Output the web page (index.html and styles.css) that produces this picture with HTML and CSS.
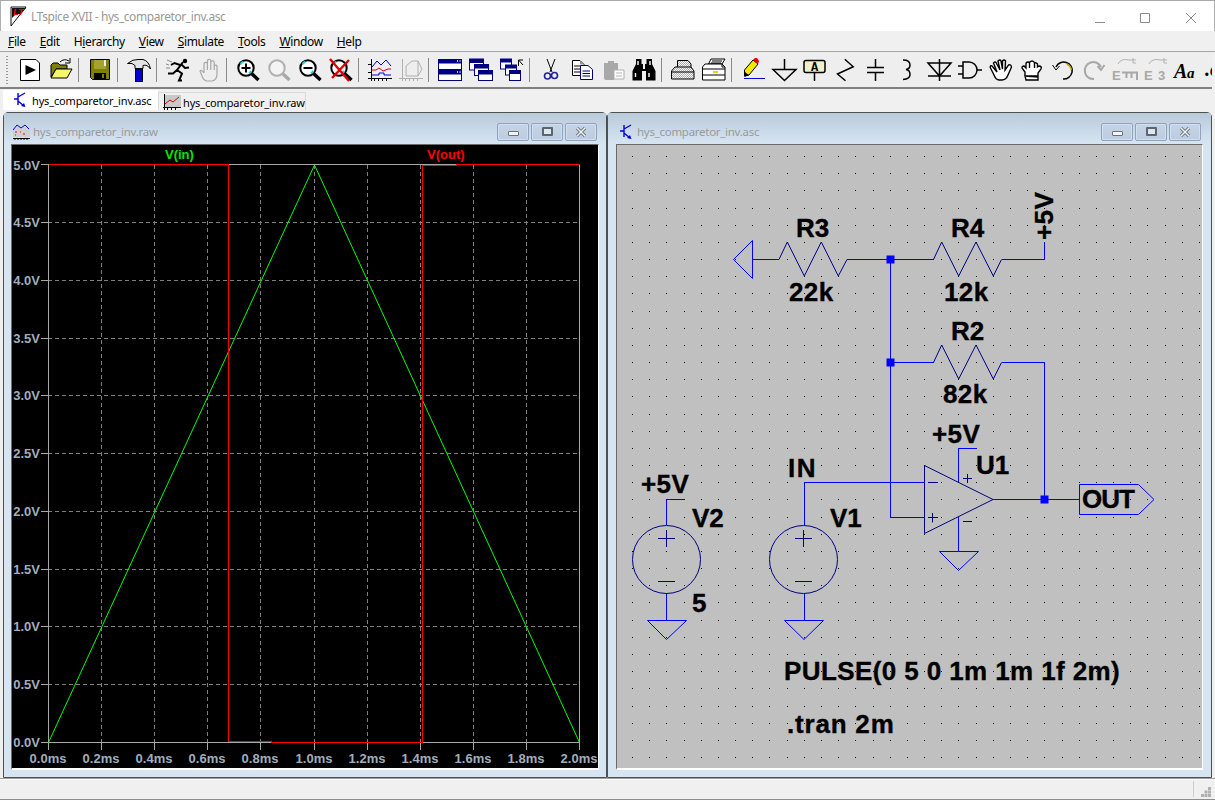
FILE: index.html
```html
<!DOCTYPE html>
<html lang="en">
<head>
<meta charset="utf-8">
<title>LTspice XVII - hys_comparetor_inv.asc</title>
<link rel="stylesheet" href="styles.css">
</head>
<body>
<div class="app">
  <header class="titlebar">
    <svg class="logo" viewBox="0 0 18 24"><path class="logo-tri" d="M1 2V21L16 2Z"/><path class="logo-flag" d="M2 3H16L11 9H6L2 13Z"/><text class="logo-text" x="3" y="10">LT</text></svg>
    <span class="apptitle">LTspice XVII - hys_comparetor_inv.asc</span>
    <div class="capbtns">
      <svg class="capsvg" viewBox="0 0 120 20"><path d="M3 15.5H13M48.5 6.5H57.5V15.5H48.5ZM94 6L104 16M104 6L94 16"/></svg>
    </div>
  </header>
  <nav class="menubar">
    <span><u>F</u>ile</span><span><u>E</u>dit</span><span>H<u>i</u>erarchy</span><span><u>V</u>iew</span><span><u>S</u>imulate</span><span><u>T</u>ools</span><span><u>W</u>indow</span><span><u>H</u>elp</span>
  </nav>
  <div class="toolbar">
    <i class="grip"></i>
    <span class="tb"><svg class="ico" viewBox="0 0 24 24"><path class="k w" d="M2.5 1.5H18L21.5 5V22.5H2.5Z"/><path d="M7.5 7L18 12L7.5 17Z"/></svg></span>
    <span class="tb"><svg class="ico" viewBox="0 0 24 24"><path class="k" fill="#808000" d="M2 19V7L4 5H9L11 7H18V11H7L2 19Z"/><path class="k" fill="#f5f56a" d="M2 20L7 11H23L18 20Z"/><path class="k n" d="M11 4Q15 0 20 3M21 0V5H16"/></svg></span>
    <i class="sep"></i>
    <span class="tb"><svg class="ico" viewBox="0 0 24 24"><path class="k" fill="#808000" d="M2.5 1.5H21.5V21.5H4.5L2.5 19.5Z"/><rect x="6" y="2" width="12" height="9" fill="#a3a32e"/><rect x="16" y="2" width="2" height="6" fill="#eee"/><rect x="6" y="15" width="12" height="6" fill="#000"/><rect x="14" y="16" width="2" height="4" fill="#808000"/></svg></span>
    <i class="sep"></i>
    <span class="tb"><svg class="ico" viewBox="0 0 24 24"><rect class="k" x="8.500" y="11" width="7" height="12.500" fill="#0000d0"/><path class="k" fill="#e4e4e4" d="M.5 5.500Q6 1 11 1.500H16Q22 3 23.500 11Q20 6 16 7.500V10.500H8V7.500L5 5.500Z"/></svg></span>
    <i class="sep"></i>
    <span class="tb"><svg class="ico" viewBox="0 0 24 24"><circle cx="19" cy="3" r="2.2"/><path class="run" d="M17 4L11 12L7 15.5H2M14 7L8.5 5L5 7M15 6L19 10L23 9.5M11 12L16 15.5L13 22.5H16"/><path class="runs" d="M1 2L6 4M0 6L3 7M0 10H4"/></svg></span>
    <span class="tb"><svg class="ico" viewBox="0 0 24 24"><path class="hg" d="M7 15V6A1.7 1.7 0 0 1 10.4 6V3A1.7 1.7 0 0 1 13.8 3V4.500A1.700 1.700 0 0 1 17.200 4.500V8A1.500 1.500 0 0 1 20 8V16Q20 22 15 23H10Q7 23 5 18L3 13Q4 11 7 15M10.400 6V12M13.800 3V12M17.200 5V12"/></svg></span>
    <i class="sep"></i>
    <span class="tb"><svg class="ico" viewBox="0 0 24 24"><path class="hd" d="M15.500 15.500L22.500 22"/><circle class="gl" cx="10" cy="10" r="7.700"/><path class="cy" d="M4.500 6L7 3.500M13 15.500L15.500 13"/><path class="pm" d="M5.500 10H14.500M10 5.500V14.500"/></svg></span>
    <span class="tb"><svg class="ico" viewBox="0 0 24 24"><path class="hd dim" d="M15.500 15.500L22.500 22"/><circle class="gl dim" cx="10" cy="10" r="7.700"/></svg></span>
    <span class="tb"><svg class="ico" viewBox="0 0 24 24"><path class="hd" d="M15.500 15.500L22.500 22"/><circle class="gl" cx="10" cy="10" r="7.700"/><path class="cy" d="M4.500 6L7 3.500M13 15.500L15.500 13"/><path class="pm" d="M5.500 10H14.500"/></svg></span>
    <span class="tb"><svg class="ico" viewBox="0 0 24 24"><path class="hd" d="M15.500 15.500L22.500 22"/><circle class="gl" cx="10" cy="10" r="7.700"/><path class="cy" d="M4.500 6L7 3.500M13 15.500L15.500 13"/><path class="xr" d="M1 1L20 23M20 2L3 20"/></svg></span>
    <i class="sep"></i>
    <span class="tb"><svg class="ico" viewBox="0 0 24 24"><path class="ax" d="M3.500 1V23M0 20.500H24M6.500 20.500V23M10.500 20.500V23M14.500 20.500V23M18.500 20.500V23M0 6.500H3M0 14.500H3"/><path class="bl" d="M4 9L9 3L13 7L18 2L23 8"/><path class="re" d="M4 12H8L11 10L15 13L20 11H23"/><path class="bl" d="M4 17H11V15H16V17H23"/></svg></span>
    <span class="tb"><svg class="ico" viewBox="0 0 24 24"><path class="g1" d="M3.500 1V23M0 20.500H24M6.500 20.500V23M10.500 20.500V23M14.500 20.500V23M18.500 20.500V23M7 8L13 3H19L23 11L19 18H7ZM19 3V18"/></svg></span>
    <i class="sep"></i>
    <span class="tb"><svg class="ico" viewBox="0 0 24 24"><rect class="nv" x=".5" y="1.500" width="23" height="10"/><rect x=".5" y="1.500" width="23" height="4" fill="#000080"/><rect class="nv" x=".5" y="12.500" width="23" height="10"/><rect x=".5" y="12.500" width="23" height="4" fill="#000080"/><path class="wd" d="M19 3H20M21.500 3H22.500M19 14H20M21.500 14H22.500"/></svg></span>
    <span class="tb"><svg class="ico" viewBox="0 0 24 24"><rect class="nv" x=".5" y="1" width="14" height="11"/><rect x=".5" y="1" width="14" height="4" fill="#000080"/><rect class="nv" x="5.500" y="6.500" width="14" height="11"/><rect x="5.500" y="6.500" width="14" height="4" fill="#000080"/><rect class="nv" x="9.500" y="12.500" width="14" height="10"/><rect x="9.500" y="12.500" width="14" height="4" fill="#000080"/></svg></span>
    <span class="tb"><svg class="ico" viewBox="0 0 24 24"><rect class="nv" x=".5" y="1" width="11" height="10"/><rect x=".5" y="1" width="11" height="3.500" fill="#000080"/><rect class="nv" x="5.500" y="7" width="11" height="10"/><rect x="5.500" y="7" width="11" height="3.500" fill="#000080"/><rect class="nv" x="9.500" y="12.500" width="11" height="10"/><rect x="9.500" y="12.500" width="11" height="3.500" fill="#000080"/><path class="k n" d="M18.500 8V2H23M18.500 2L23 7"/></svg></span>
    <i class="sep"></i>
    <span class="tb"><svg class="ico" viewBox="0 0 24 24"><path class="k n" d="M8 1L13 14M16 1L11 14"/><circle class="sc" cx="8.500" cy="18" r="3"/><circle class="sc" cx="15.500" cy="17.500" r="3"/></svg></span>
    <span class="tb"><svg class="ico" viewBox="0 0 24 24"><path class="k w" d="M2.500 2.500H10L14 6.500V17.500H2.500Z"/><path d="M10 2.500L14 6.500H10Z" fill="#999"/><path class="k n" d="M4 8H11M4 11H10M4 14H10"/><path class="nv" d="M10.500 7.500H18L22.500 11.500V21.500H10.500Z"/><path class="nv n" d="M12.500 13H20M12.500 15.500H20M12.500 18H20"/></svg></span>
    <span class="tb"><svg class="ico" viewBox="0 0 24 24"><path fill="#a8a8a8" d="M3 5H7V3H13V5H17V12H13V22H5Q3 22 3 20Z"/><path class="g1 w" d="M13 12H23V21H13Z"/><path class="g1" d="M15 15H21M15 18H21"/></svg></span>
    <span class="tb"><svg class="ico" viewBox="0 0 24 24"><path d="M4 1H9.500V6H11V11H13V6H14.500V1H20V6L23.500 13V22.500H14V13H10V22.500H.5V13L4 6Z"/><path class="wd" d="M3.500 15V19M17 15V19M6 3V7M18 3V7"/></svg></span>
    <i class="sep"></i>
    <span class="tb"><svg class="ico" viewBox="0 0 24 24"><path class="k" fill="url(#dith)" d="M6.500 2.500H17L20 6V13H6.500Z"/><path class="k" fill="url(#dith)" d="M.5 13L4 9H20L23 13V21H.5Z"/><path class="k n" d="M.5 14H23"/></svg></span>
    <span class="tb"><svg class="ico" viewBox="0 0 24 24"><path class="k w" d="M6.500 6L9 1H23L20 6Z"/><path class="k n" d="M10 3H20M9 5H19"/><path class="k w" d="M3 6H20L23 9V22H.5V9Z"/><path class="k n" d="M.5 11H23M.5 17H23M20 6V9H23"/><path d="M11 13H16V15H11Z" fill="#e8d800"/></svg></span>
    <i class="sep"></i>
    <span class="tb"><svg class="ico" viewBox="0 0 24 24"><path class="k" fill="#f2e800" d="M3.500 18V12L12 2L17 6L8 17Z"/><path fill="#e80000" d="M12 2L14 0H16L18 3L17 6Z"/><path d="M3.500 19L3.500 13L5 15L8 17Z"/><path class="bl" d="M3 20.500H24"/></svg></span>
    <span class="tb"><svg class="ico" viewBox="0 0 24 24"><path class="gnd" d="M12.500 1V11.500M1 11.500H24L12.500 22.500Z"/></svg></span>
    <span class="tb"><svg class="ico" viewBox="0 0 24 24"><rect x="1" y="2.500" width="21" height="12" rx="2" fill="#f2efc9"/><rect x="1" y="2.500" width="21" height="12" rx="2" class="gnd"/><text class="icotxt" x="8" y="13">A</text><path class="gnd" d="M11.500 15V23"/></svg></span>
    <span class="tb"><svg class="ico" viewBox="0 0 24 24"><path class="gnd" d="M10.800 1.300L19.200 8.700L3.500 16L11.500 22.700"/></svg></span>
    <span class="tb"><svg class="ico" viewBox="0 0 24 24"><path class="gnd" d="M10.500 1V9.500M2 9.500H19M2 14.500H19M10.500 14.500V23"/></svg></span>
    <span class="tb"><svg class="ico" viewBox="0 0 24 24"><path class="gnd" d="M7 2Q14 2 14 7Q14 11 10 11.500Q14 12 14 16.500Q14 21 7 21.500"/></svg></span>
    <span class="tb"><svg class="ico" viewBox="0 0 24 24"><path class="gnd" d="M1 5H24L12.500 18ZM1 18H24M12.500 1V23"/></svg></span>
    <span class="tb"><svg class="ico" viewBox="0 0 24 24"><path class="gnd" d="M0 8H5M0 16H5M5 4H11A8 8 0 0 1 11 20H5ZM19 12H24"/></svg></span>
    <span class="tb"><svg class="ico" viewBox="0 0 24 24"><path class="hb" d="M1 9Q2 7 3 8L8 14L4.500 5Q6 3 7 4.500L11 12L9 3Q11 1 12 3L13.500 11L13.500 3Q15 1 16.500 3L16 12L19.500 7Q22 6 22.500 9L19 17Q17 22 13 22H10Q7 22 5 17L1 9"/></svg></span>
    <span class="tb"><svg class="ico" viewBox="0 0 24 24"><path class="hb" d="M5 18V14L2 10Q2 8 4 8L6 10V6Q6 4 8 4Q9 4 9.500 5Q10 3 12 3Q14 3 14.500 5Q16 4 17.500 6V9L19 8Q22 8 21 11L18 15V19ZM5 18H18V22H6ZM9.500 5V10M14.500 5V10"/></svg></span>
    <span class="tb"><svg class="ico" viewBox="0 0 24 24"><path class="gnd" d="M5 9A8.500 8.500 0 1 1 12 21"/><path class="k n" d="M1.500 7L5 12L8.500 8"/><path class="ye" d="M16 6A8.500 8.500 0 0 1 20.500 12"/></svg></span>
    <span class="tb"><svg class="ico" viewBox="0 0 24 24"><path class="g2" d="M19 9A8.500 8.500 0 1 0 12 21M22.500 7L19 12L15.500 8"/></svg></span>
    <span class="tb"><svg class="ico" viewBox="0 0 24 24"><text class="emt" x="-1" y="22">E</text><path class="g2" d="M9 14.500H24V22M13.500 15V20M18.500 15V20"/><path class="g1" d="M5 6Q8 0 16 2H23M20 0V5H23"/></svg></span>
    <span class="tb"><svg class="ico" viewBox="0 0 24 24"><text class="emt" x="0" y="22">E</text><text class="emt" x="14" y="22">3</text><path class="g1" d="M5 6Q8 0 16 2H23M20 0V5H23"/></svg></span>
    <span class="tb"><svg class="ico" viewBox="0 0 24 24"><text class="aa" x="-1" y="20">A</text><text class="ab" x="12" y="20">a</text></svg></span>
    <span class="tb"><svg class="ico ovf" viewBox="0 0 24 24"><text class="aa" x="-1" y="18">.o</text></svg></span>
  </div>
  <div class="tabs">
    <div class="tab active">
      <svg class="tabico" viewBox="0 0 14 16"><path class="tr" d="M5 1V13M1 7H5M5 5L12 1M5 9L11 14"/><path class="tra" d="M12.500 15L8 14L11 11Z"/></svg>
      <span>hys_comparetor_inv.asc</span>
    </div>
    <div class="tab">
      <svg class="tabico wide" viewBox="0 0 18 16"><rect x="2" y="1" width="16" height="13" fill="#c8c8c8"/><path class="ax" d="M1.500 0V16M0 13.500H18M4.500 13.500V16M8.500 13.500V16M12.500 13.500V16"/><path class="re" d="M2 10L7 6L10 8L16 3"/></svg>
      <span>hys_comparetor_inv.raw</span>
    </div>
  </div>
  <main class="desk">
    <section class="win win-left">
      <div class="wintitle">
        <svg class="winico" viewBox="0 0 17 16"><rect y="4" width="17" height="9" fill="#cfcfcf"/><path class="bl" d="M0 6L4 1L8 4L12 1L16 5"/><path class="dots" d="M2 8H4M7 8H8M10 10H12M2 11H3"/><path class="ax" d="M0 14.500H17M2 14.500V16M5 14.500V16M8 14.500V16M11 14.500V16M14 14.500V16"/></svg>
        <span class="wintext">hys_comparetor_inv.raw</span>
        <span class="wbtn"><i class="g-min"></i></span><span class="wbtn"><i class="g-res"></i></span><span class="wbtn"><svg class="g-x" viewBox="0 0 12 10"><path d="M2 1L10 9M10 1L2 9"/><path class="in" d="M2 1L10 9M10 1L2 9"/></svg></span>
      </div>
      <div class="client client-plot">
        <svg class="canvas" viewBox="12 145 586 623">
          <path class="grid" d="M48 222.500H579M48 280.500H579M48 338.500H579M48 395.500H579M48 453.500H579M48 511.500H579M48 569.500H579M48 626.500H579M48 684.500H579M101.500 165V742M154.500 165V742M207.500 165V742M260.500 165V742M314.500 165V742M367.500 165V742M420.500 165V742M473.500 165V742M526.500 165V742"/>
          <path class="frame" d="M48.500 164.500H579.500V742.500H48.500ZM41 164.500H48M41 222.500H48M41 280.500H48M41 338.500H48M41 395.500H48M41 453.500H48M41 511.500H48M41 569.500H48M41 626.500H48M41 684.500H48M41 742.500H48M48.500 743V750M101.500 743V750M154.500 743V750M207.500 743V750M260.500 743V750M314.500 743V750M367.500 743V750M420.500 743V750M473.500 743V750M526.500 743V750M579.500 743V750"/>
          <path class="trace-g" d="M48.500 742.500L314.500 165L579.500 742.500"/>
          <path class="trace-r" d="M48.500 164.500H228.500V741.500H271V742.500H422.500V165.500H456V164.500H579.500"/>
          <text class="probe pg" x="165" y="159">V(in)</text>
          <text class="probe pr" x="427" y="159">V(out)</text>
          <g class="yl">
            <text x="40" y="170">5.0V</text><text x="40" y="227">4.5V</text><text x="40" y="285">4.0V</text><text x="40" y="343">3.5V</text><text x="40" y="400">3.0V</text><text x="40" y="458">2.5V</text><text x="40" y="516">2.0V</text><text x="40" y="574">1.5V</text><text x="40" y="631">1.0V</text><text x="40" y="689">0.5V</text><text x="40" y="747">0.0V</text>
          </g>
          <g class="xl">
            <text x="48" y="763">0.0ms</text><text x="101" y="763">0.2ms</text><text x="154" y="763">0.4ms</text><text x="207" y="763">0.6ms</text><text x="260" y="763">0.8ms</text><text x="314" y="763">1.0ms</text><text x="367" y="763">1.2ms</text><text x="420" y="763">1.4ms</text><text x="473" y="763">1.6ms</text><text x="526" y="763">1.8ms</text><text x="579" y="763">2.0ms</text>
          </g>
        </svg>
      </div>
    </section>
    <section class="win win-right">
      <div class="wintitle">
        <svg class="winico small" viewBox="0 0 14 16"><path class="tr" d="M5 1V13M1 7H5M5 5L12 1M5 9L11 14"/><path class="tra" d="M12.500 15L8 14L11 11Z"/></svg>
        <span class="wintext">hys_comparetor_inv.asc</span>
        <span class="wbtn"><i class="g-min"></i></span><span class="wbtn"><i class="g-res"></i></span><span class="wbtn"><svg class="g-x" viewBox="0 0 12 10"><path d="M2 1L10 9M10 1L2 9"/><path class="in" d="M2 1L10 9M10 1L2 9"/></svg></span>
      </div>
      <div class="client client-sch">
        <svg class="canvas" viewBox="617 145 585 623">
          <path class="griddots" d="M632 156.500H1201M632 173.700H1201M632 190.800H1201M632 208H1201M632 225.200H1201M632 242.400H1201M632 259.500H1201M632 276.700H1201M632 293.900H1201M632 311H1201M632 328.200H1201M632 345.400H1201M632 362.600H1201M632 379.700H1201M632 396.900H1201M632 414.100H1201M632 431.200H1201M632 448.400H1201M632 465.600H1201M632 482.700H1201M632 499.900H1201M632 517.100H1201M632 534.300H1201M632 551.400H1201M632 568.600H1201M632 585.800H1201M632 602.900H1201M632 620.100H1201M632 637.300H1201M632 654.500H1201M632 671.600H1201M632 688.800H1201M632 706H1201M632 723.100H1201M632 740.300H1201M632 757.500H1201"/>
          <path class="wire" d="M752.500 259.500H779M847 259.500H933.500M1001.500 259.500H1044.500V241.500M890.500 259.500V517.500H924.500M890.500 362.500H933.500M1001.500 362.500H1044.500V499.500M804 482.500H924.500M804 482.500V525M804 593V620.500M666.500 499.500H685M666.500 499.500V525M666.500 593V620.500M958.500 481.500V448.500H977M958.500 517V551.500M993 499.500H1079.500"/>
          <path class="gndw" d="M647.500 620.500H686.500L666.500 639.500ZM784.500 620.500H823.500L804 639.500ZM939.500 551.500H978.500L958.500 570.500ZM752.500 240.500V278.500L733.500 259.500ZM1079.500 484.500H1138.500L1154 499.500L1138.500 514.500H1079.500Z"/>
          <path class="sym" d="M779 259.500L787.300 242L804.300 276L821.300 242L838.300 276L847 259.500M933.500 259.500L941.700 242L958.700 276L976 242L993.300 276L1001.500 259.500M933.500 362.500L941.700 345L958.700 379L976 345L993.300 379L1001.500 362.500"/>
          <circle class="sym" cx="666.500" cy="559.500" r="34"/>
          <circle class="sym" cx="803.500" cy="559.500" r="34"/>
          <path class="sym" d="M658 538.500H675M666.500 530V547M658 581.500H675M795 538.500H812M803.500 530V547M795 581.500H812M924.500 465.500V533.500L993 499.500ZM928 482.500H938M928 517.500H938M932.500 513V522.500M963 478.500H972M967.500 474V483M963 521.500H972"/>
          <rect class="jn" x="886.500" y="255.500" width="8" height="8"/>
          <rect class="jn" x="886.500" y="358.500" width="8" height="8"/>
          <rect class="jn" x="1040.500" y="495.500" width="8" height="8"/>
          <g class="lbl">
            <text class="tight" x="796" y="237">R3</text><text x="789" y="301">22k</text>
            <text class="tight" x="951" y="237">R4</text><text x="944" y="301">12k</text>
            <text class="tight" x="951" y="340">R2</text><text x="943" y="403">82k</text>
            <text transform="translate(1053 240) rotate(-90)">+5V</text>
            <text x="641" y="493">+5V</text><text class="tight" x="692" y="527">V2</text><text x="692" y="612">5</text>
            <text class="wide" x="788" y="477">IN</text><text class="tight" x="830" y="527">V1</text>
            <text x="932" y="443">+5V</text><text class="tight" x="976" y="474">U1</text>
            <text class="out" x="1082" y="508">OUT</text>
            <text x="784" y="680">PULSE(0 5 0 1m 1m 1f 2m)</text>
            <text class="dot" x="787" y="733">.tran 2m</text>
          </g>
        </svg>
      </div>
    </section>
  </main>
  <footer class="status"><i class="statsep"></i><svg class="resize" viewBox="0 0 10 10"><path d="M7 0h3v3H7zM3.500 3.500h3v3h-3zM7 3.500h3v3H7zM0 7h3v3H0zM3.500 7h3v3h-3zM7 7h3v3H7z"/></svg></footer>
  <svg class="defs" width="0" height="0"><defs><pattern id="dith" width="2" height="2" patternUnits="userSpaceOnUse"><rect width="2" height="2" fill="#fff"/><rect width="1" height="1" fill="#aaa"/><rect x="1" y="1" width="1" height="1" fill="#aaa"/></pattern></defs></svg>
</div>
</body>
</html>
```
FILE: styles.css
```css
* { box-sizing: border-box; }
html, body { margin: 0; padding: 0; height: 100%; overflow: hidden; }
body { background: #f0f0f0; font-family: "Noto Sans", "Open Sans", sans-serif; color: #000; }
.app { width: 1215px; height: 800px; display: flex; flex-direction: column; border-top: 1px solid #a8a8a8; border-bottom: 1px solid #8e8e8e; overflow: hidden; }

.titlebar { height: 30px; background: #fff; display: flex; align-items: center; padding-left: 9px; flex: none; border-left: 1px solid #b0b0b0; border-right: 1px solid #b0b0b0; }
.logo { width: 18px; height: 24px; margin-top: 1px; }
.logo-tri { fill: #fff; stroke: #111; stroke-width: 1; }
.logo-flag { fill: #111; }
.logo-text { font: italic bold 9.5px "Liberation Sans", sans-serif; fill: #f00; }
.apptitle { margin-left: 3px; font-size: 12px; color: #999; letter-spacing: -.43px; }
.capbtns { margin-left: auto; margin-right: 2px; display: flex; }
.capsvg { width: 120px; height: 20px; margin-top: 2px; }
.capsvg path { stroke: #8a8a8a; fill: none; stroke-width: 1; }

.menubar { height: 21px; background: #f0f0f0; display: flex; gap: 14px; padding-left: 8px; align-items: center; font-size: 12px; letter-spacing: -.36px; flex: none; border-bottom: 1px solid #a5a5a5; }
.menubar u { text-decoration: underline; }

.toolbar { height: 37px; background: #eeeeee; display: flex; align-items: center; padding-left: 6px; border-bottom: 2px solid #808080; flex: none; width: 1212px; overflow: hidden; }
.grip { width: 2px; height: 28px; margin-right: 6px; background: repeating-linear-gradient(#9a9a9a 0 1px, transparent 1px 3px); flex: none; }
.tb { width: 31px; height: 24px; display: flex; justify-content: center; flex: none; }
.ico { width: 24px; height: 24px; overflow: visible; }
.sep { width: 1px; height: 24px; background: #8a8a8a; margin: 0 5px 0 2px; flex: none; }
.k { stroke: #000; stroke-width: 1; }
.w { fill: #fff; }
.n { fill: none; }
.run { stroke: #000; stroke-width: 2; fill: none; }
.runs { stroke: #8a8a8a; stroke-width: 1; fill: none; }
.hg { stroke: #a8a8a8; stroke-width: 1.2; fill: none; }
.hb { stroke: #000; stroke-width: 1.4; fill: #fff; }
.hd { stroke: #000; stroke-width: 3.4; fill: none; }
.hd.dim { stroke: #a8a8a8; }
.gl { stroke: #000; stroke-width: 2; fill: #fff; }
.gl.dim { stroke: #b0b0b0; fill: #f4f4f4; }
.cy { stroke: #20d0e0; stroke-width: 2; fill: none; }
.pm { stroke: #000; stroke-width: 2; fill: none; }
.xr { stroke: #e00000; stroke-width: 2.4; fill: none; }
.ax { stroke: #000; stroke-width: 1; fill: none; }
.bl { stroke: #0000e0; stroke-width: 1; fill: none; }
.re { stroke: #e00000; stroke-width: 1; fill: none; }
.g1 { stroke: #b0b0b0; stroke-width: 1; fill: none; }
.g1.w { fill: #fff; }
.g2 { stroke: #a8a8a8; stroke-width: 2; fill: none; }
.nv { stroke: #000080; stroke-width: 1; fill: #fff; }
.nv.n { fill: none; }
.wd { stroke: #fff; stroke-width: 1.4; fill: none; }
.sc { stroke: #20209a; stroke-width: 1.6; fill: none; }
.gnd { stroke: #000; stroke-width: 1.5; fill: none; }
.ye { stroke: #b8a800; stroke-width: 1.5; fill: none; }
.icotxt { font: bold 12px "Liberation Mono", monospace; fill: #000; }
.emt { font: bold 13px "Liberation Sans", sans-serif; fill: #a8a8a8; }
.aa { font: italic bold 20px "Liberation Serif", serif; fill: #000; }
.ab { font: italic bold 15px "Liberation Serif", serif; fill: #000; }
.ovf { overflow: visible; }

.tabs { height: 23px; display: flex; align-items: flex-end; padding-left: 3px; background: #f0f0f0; flex: none; padding-bottom: 2px; }
.tab { height: 18px; width: 148px; display: flex; align-items: center; gap: 2px; padding-left: 4px; font-size: 11px; background: #f0f0f0; border: 1px solid #d9d9d9; border-bottom: 0; letter-spacing: -.15px; }
.tab span { margin-top: 2px; }
.tab.active { height: 20px; width: 155px; background: #fff; border: 0; padding-left: 10px; gap: 5px; }
.tab.active span { margin-top: 0; }
.tabico { width: 14px; height: 16px; flex: none; }
.tabico.wide { width: 18px; }
.tr { stroke: #0000e8; stroke-width: 1.4; fill: none; }
.tra { fill: #0000e8; }

.desk { height: 666px; display: flex; padding-left: 3px; flex: none; }
.win { display: flex; flex-direction: column; height: 666px; border: 1px solid #505050; border-radius: 5px 5px 0 0; background: #d7e5f3; padding: 0 7px 7px; }
.win-left { width: 604px; }
.win-right { width: 605px; padding: 0 8px 7px; }
.wintitle { height: 31px; margin: 0 -7px; padding: 6px 9px 0 8px; flex: none; display: flex; align-items: center; background: linear-gradient(#b9cad9, #d7e5f3); }
.win-right .wintitle { margin: 0 -8px; padding-right: 10px; }
.winico { width: 17px; height: 16px; margin: 0 3px 0 1px; flex: none; }
.winico.small { width: 14px; height: 16px; margin-left: 3px; margin-right: 4px; }
.wintext { font-size: 11.5px; color: #9a9a9a; letter-spacing: -.28px; flex: 1; }
.dots { stroke: #d01010; stroke-width: 1; fill: none; }
.wbtn { width: 32px; height: 18px; margin-left: 2px; border: 1px solid #8ea3bd; border-radius: 2px; background: linear-gradient(#c6d4e4, #bccce0); box-shadow: inset 0 0 0 1px #d3dfec; display: flex; align-items: center; justify-content: center; flex: none; }
.g-min { width: 11px; height: 5px; background: #f4f4f4; border: 1px solid #66727e; border-radius: 1px; margin-top: 4px; }
.g-res { width: 11px; height: 9px; background: #dfe6ee; border: 2px solid #5a6570; border-radius: 1px; }
.g-x { width: 12px; height: 10px; }
.g-x path { stroke: #66727e; stroke-width: 3.2; fill: none; }
.g-x path.in { stroke: #f4f6f8; stroke-width: 1.4; }
.client { height: 626px; border-top: 1px solid #6a6a6a; border-left: 1px solid #6a6a6a; border-right: 1px solid #fff; border-bottom: 2px solid #fff; flex: none; }
.client-plot { background: #000; }
.client-sch { background: #c0c0c0; }
.canvas { display: block; width: 100%; height: 100%; }

.grid { stroke: #808080; stroke-width: 1; stroke-dasharray: 4 3; fill: none; shape-rendering: crispEdges; }
.frame { stroke: #a8a8a8; stroke-width: 1; fill: none; shape-rendering: crispEdges; }
.trace-g { stroke: #00ff00; stroke-width: 1; fill: none; }
.trace-r { stroke: #ff0000; stroke-width: 1; fill: none; shape-rendering: crispEdges; }
.probe { font: bold 13px "Liberation Sans", sans-serif; }
.pg { fill: #00e800; }
.pr { fill: #f00; }
.yl text { font: bold 13px "Liberation Sans", sans-serif; fill: #a0aebc; text-anchor: end; }
.xl text { font: bold 13px "Liberation Sans", sans-serif; fill: #a0aebc; text-anchor: middle; }

.griddots { stroke: #000; stroke-width: 1; stroke-dasharray: 1 16.18; fill: none; shape-rendering: crispEdges; }
.wire { stroke: #0000ff; stroke-width: 1; fill: none; shape-rendering: crispEdges; }
.gndw { stroke: #0000ff; stroke-width: 1; fill: none; }
.sym { stroke: #000080; stroke-width: 1; fill: none; }
.jn { fill: #0000ff; }
.lbl text { font: bold 26px "Liberation Sans", sans-serif; fill: #000; stroke: #000; stroke-width: .35px; letter-spacing: .4px; }
.lbl text.tight { letter-spacing: 0; }
.lbl text.wide { letter-spacing: 1.5px; }
.lbl text.out { letter-spacing: -1px; }
.lbl text.dot { letter-spacing: .8px; }

.status { flex: 1; background: #f0f0f0; border-top: 1px solid #a0a0a0; box-shadow: inset 0 1px 0 #fff; display: flex; justify-content: flex-end; align-items: flex-end; padding: 0 4px 2px 0; }
.statsep { width: 1px; height: 16px; background: #d0d0d0; margin-right: 7px; }
.resize { width: 10px; height: 10px; }
.resize path { fill: #b0b0b0; }
.defs { position: absolute; }
```
